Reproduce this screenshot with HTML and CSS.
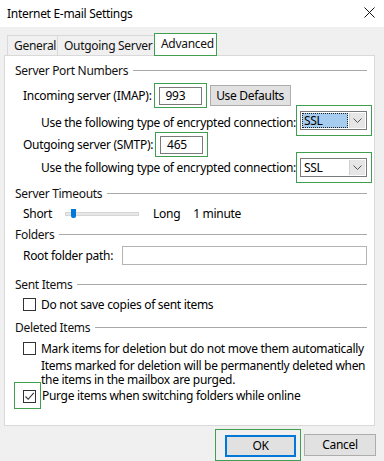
FILE: index.html
```html
<!DOCTYPE html>
<html lang="en">
  <head>
    <meta charset="UTF-8" />
    <title>Internet E-mail Settings</title>
    <link rel="stylesheet" href="styles.css">
  </head>
  <body>
    <div class="window">
      <div class="titlebar">
        <span class="title">Internet E-mail Settings</span>
        <svg class="close" width="11" height="11" viewBox="0 0 11 11">
          <path d="M0.5 0.5 L10.5 10.5 M10.5 0.5 L0.5 10.5" stroke="#111" stroke-width="1" />
        </svg>
      </div>

      <div class="tabs">
        <div class="tab tab-general">General</div>
        <div class="tab tab-outgoing">Outgoing Server</div>
        <div class="tab tab-active mark">Advanced</div>
      </div>

      <div class="panel">
        <div class="group-head first"><span>Server Port Numbers</span><i></i></div>
        <div class="row row-incoming">
          <span class="label">Incoming server (IMAP):</span>
          <span class="mark mark-input"><span class="textbox port">993</span></span>
          <button class="button defaults" type="button">Use Defaults</button>
        </div>
        <div class="row row-enc1">
          <span class="label indent">Use the following type of encrypted connection:</span>
          <span class="mark mark-select">
            <span class="select"><span class="value selected">SSL</span><span class="arrow"><svg width="9" height="5" viewBox="0 0 9 5"><path d="M0.5 0.5 L4.5 4.5 L8.5 0.5" fill="none" stroke="#555" /></svg></span></span>
          </span>
        </div>
        <div class="row row-outgoing">
          <span class="label">Outgoing server (SMTP):</span>
          <span class="mark mark-input"><span class="textbox port">465</span></span>
        </div>
        <div class="row row-enc2">
          <span class="label indent">Use the following type of encrypted connection:</span>
          <span class="mark mark-select">
            <span class="select"><span class="value">SSL</span><span class="arrow"><svg width="9" height="5" viewBox="0 0 9 5"><path d="M0.5 0.5 L4.5 4.5 L8.5 0.5" fill="none" stroke="#555" /></svg></span></span>
          </span>
        </div>

        <div class="group-head timeouts"><span>Server Timeouts</span><i></i></div>
        <div class="row row-slider">
          <span class="label">Short</span>
          <span class="slider"><span class="thumb"></span></span>
          <span class="long">Long</span>
          <span class="minutes">1 minute</span>
        </div>

        <div class="group-head folders"><span>Folders</span><i></i></div>
        <div class="row row-root">
          <span class="label">Root folder path:</span>
          <span class="textbox root"></span>
        </div>

        <div class="group-head sent"><span>Sent Items</span><i></i></div>
        <div class="row row-check">
          <span class="checkbox"></span>
          <span class="label">Do not save copies of sent items</span>
        </div>

        <div class="group-head deleted"><span>Deleted Items</span><i></i></div>
        <div class="row row-mark">
          <span class="checkbox"></span>
          <span class="label">Mark items for deletion but do not move them automatically</span>
        </div>
        <p class="note">Items marked for deletion will be permanently deleted when<br>the items in the mailbox are purged.</p>
        <div class="row row-purge">
          <span class="mark mark-check">
            <span class="checkbox checked"><svg width="11" height="11" viewBox="0 0 11 11"><path d="M1.5 5.5 L4.2 8.3 L9.8 1.8" fill="none" stroke="#333" stroke-width="1.1" /></svg></span>
          </span>
          <span class="label">Purge items when switching folders while online</span>
        </div>
      </div>

      <div class="footer">
        <span class="mark mark-ok"><button class="button ok" type="button">OK</button></span>
        <button class="button cancel" type="button">Cancel</button>
      </div>
    </div>
  </body>
</html>
```

FILE: styles.css
```css
* {
  margin: 0;
  padding: 0;
  box-sizing: border-box;
}

body {
  background-color: #f0f0f0;
  font-family: "Noto Sans", "Open Sans", sans-serif;
  font-size: 12px;
  letter-spacing: -0.3px;
  color: #000;
  width: 384px;
  height: 461px;
  overflow: hidden;
}

.window {
  width: 384px;
  height: 461px;
}

.titlebar {
  height: 27px;
  background-color: #fff;
  display: flex;
  align-items: center;
  justify-content: space-between;
  padding: 0 9px 0 7px;
}

.title {
  margin-top: -1px;
}

.close {
  margin-top: -2px;
}

/* tabs */
.tabs {
  display: flex;
  align-items: flex-end;
  height: 28px;
  padding: 0 0 0 7px;
}

.tab {
  height: 20px;
  line-height: 19px;
  padding-left: 6px;
  border: 1px solid #d9d9d9;
  border-bottom: none;
  border-right: none;
  background-color: #f0f0f0;
  color: #111;
  white-space: nowrap;
}

.tab-general {
  width: 50px;
}

.tab-outgoing {
  width: 97px;
}

.tab-active {
  width: 63px;
  height: 23px;
  line-height: 19px;
  background-color: #fff;
  margin-bottom: -1px;
  position: relative;
  z-index: 1;
}

/* green annotation boxes */
.mark {
  border: 1px solid #3f9f4f !important;
}

/* panel */
.panel {
  margin: 0 9px 0 4px;
  height: 371px;
  background-color: #fff;
  border: 1px solid #d9d9d9;
  padding: 6px 7px 0 10px;
}

.group-head {
  display: flex;
  align-items: center;
  height: 16px;
  color: #111;
  white-space: nowrap;
}

.group-head i {
  flex: 1;
  height: 1px;
  background-color: #a8a8a8;
  margin-left: 5px;
}

.timeouts {
  margin-top: 7px;
}

.sent {
  margin-top: 9px;
}

.row {
  display: flex;
  align-items: center;
  padding-left: 8px;
}

.label {
  white-space: nowrap;
}

.indent {
  margin-left: 18px;
}

.row-incoming {
  height: 34px;
}

.row-enc1 {
  height: 20px;
}

.row-outgoing {
  height: 24px;
}

.row-enc2 {
  height: 22px;
}

.mark-input {
  display: flex;
  padding: 3px 4px 2px 4px;
  margin-left: 2px;
}

.textbox {
  display: flex;
  align-items: center;
  border: 1px solid #7a7a7a;
  background-color: #fff;
  height: 18px;
}

.port {
  width: 43px;
  padding-left: 6px;
}

.button {
  font-family: inherit;
  font-size: 12px;
  letter-spacing: -0.3px;
  color: #000;
  background-color: #e1e1e1;
  border: 1px solid #adadad;
}

.defaults {
  width: 81px;
  height: 21px;
  margin-left: 3px;
}

.mark-select {
  display: flex;
  padding: 5px 4px 5px 3px;
  margin-left: auto;
  margin-right: -4px;
}

.row-enc1 .mark-select {
  margin-top: -4px;
}

.select {
  display: flex;
  width: 67px;
  height: 19px;
  border: 1px solid #7a7a7a;
  background-color: #fff;
  padding: 1px;
}

.value {
  flex: 1;
  display: flex;
  align-items: center;
  padding-left: 2px;
}

.selected {
  background-color: #a6cdf0;
  outline: 1px dotted #222;
  outline-offset: -1px;
  margin-right: 1px;
}

.arrow {
  width: 16px;
  display: flex;
  align-items: center;
  justify-content: center;
  background-color: #e6e6e6;
  border-left: 1px solid #cfcfcf;
}

/* slider */
.row-slider {
  height: 24px;
}

.slider {
  position: relative;
  width: 74px;
  height: 4px;
  background-color: #e7e7e7;
  border: 1px solid #d6d6d6;
  margin-left: 13px;
  margin-top: 1px;
}

.thumb {
  position: absolute;
  left: 5px;
  top: -4px;
  width: 5px;
  height: 9px;
  background-color: #0078d7;
  border-radius: 0 0 2px 2px;
}

.long {
  margin-left: 14px;
}

.minutes {
  margin-left: 13px;
}

.folders {
  height: 18px;
}

.row-root {
  height: 24px;
}

.root {
  flex: 1;
  height: 19px;
  margin-left: 9px;
  border-color: #b4b4b4;
}

.row-check {
  height: 24px;
}

.deleted {
  height: 22px;
}

.row-mark {
  height: 20px;
}

.checkbox {
  display: inline-flex;
  align-items: center;
  justify-content: center;
  width: 13px;
  height: 13px;
  border: 1px solid #333;
  background-color: #fff;
  margin-right: 5px;
  flex-shrink: 0;
}

.note {
  padding: 1px 0 0 26px;
  line-height: 13.5px;
  height: 28px;
  white-space: nowrap;
}

.row-purge {
  height: 19px;
}

.mark-check {
  display: flex;
  padding: 7px 4px 5px 8px;
  margin-left: -9px;
  margin-right: 1px;
}

.mark-check .checkbox {
  margin-right: 0;
}

/* footer */
.footer {
  display: flex;
  align-items: center;
  justify-content: flex-end;
  padding: 2px 8px 0 0;
  height: 35px;
}

.mark-ok {
  display: flex;
  padding: 5px 4px 3px 9px;
  margin-right: 3px;
}

.ok {
  width: 71px;
  height: 22px;
  border: 2px solid #0078d7;
}

.cancel {
  width: 72px;
  height: 22px;
}
```
